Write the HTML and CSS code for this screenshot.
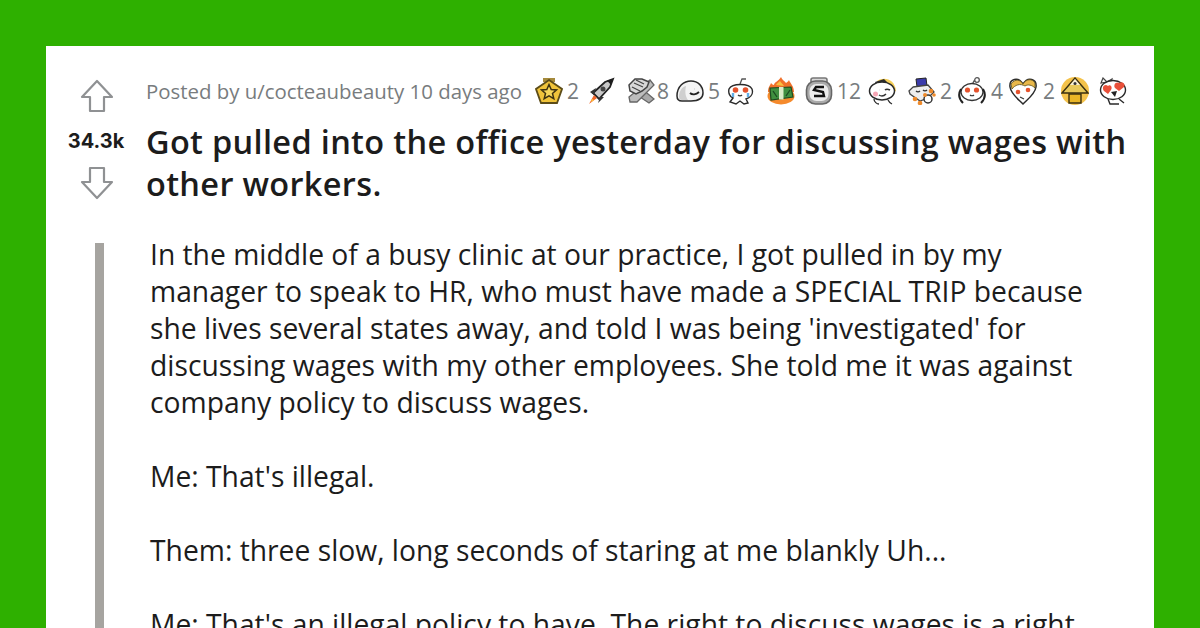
FILE: index.html
```html
<!DOCTYPE html>
<html lang="en">
<head>
<meta charset="utf-8">
<title>Got pulled into the office</title>
<link rel="stylesheet" href="styles.css">
</head>
<body>
<main class="card">
  <aside class="votes">
    <svg class="arrow" viewBox="0 0 34 34"><path d="M17 2 L32 18 H24 V32 H10 V18 H2 Z"/></svg>
    <div class="score">34.3k</div>
    <svg class="arrow" viewBox="0 0 34 34"><path d="M17 32 L32 16 H24 V2 H10 V16 H2 Z"/></svg>
  </aside>
  <div class="post">
    <header class="meta">
      <span class="byline">Posted by u/cocteaubeauty 10 days ago</span>
      <div class="awards">
        <svg class="aw" viewBox="0 0 28 28"><path d="M8 1h12v4H8z" fill="#a58a3c"/><path d="M14 3 27 12 22 26H6L1 12Z" fill="#f0c33a" stroke="#5c4c18" stroke-width="1.800"/><path d="M14 7.500l2.200 5 5.300.4-4 3.500 1.300 5.200L14 18.800 9.200 21.600l1.300-5.200-4-3.500 5.300-.4z" fill="#f6d65a" stroke="#3e3210" stroke-width="1.500"/></svg>
        <span class="n n1">2</span>
        <svg class="aw a2" viewBox="0 0 28 28"><path d="M6 16 18 5l8-3-3 8-11 12z" fill="#c8c8c8" stroke="#222" stroke-width="1.800"/><path d="M20 3.500 26 2l-2 6z" fill="#1c1c1c"/><circle cx="16" cy="12" r="2.500" fill="#444"/><path d="M9 11 3 15l4 3zM13 20l-2 6 6-6z" fill="#333"/><path d="M7 18l3 3-8 6z" fill="#f1662a"/><path d="M5 22l2 1-3 2z" fill="#fdd03a"/></svg>
        <svg class="aw a3" viewBox="0 0 28 28"><path d="M7 16 22 26l5-4L14 11z" fill="#a9a9a9" stroke="#666" stroke-width="1.300"/><path d="M23 3 27 8 10 25H3L2 20z" fill="#bdbdbd" stroke="#666" stroke-width="1.300"/><path d="M2 8 8 2h7l7 3-2 5-5 4-6 3-6-3z" fill="#d8d8d8" stroke="#444" stroke-width="1.500"/><path d="M7 6l9 4M5 10l8 4M9 3l8 4" stroke="#444" stroke-width="1.200" fill="none"/></svg>
        <span class="n n3">8</span>
        <svg class="aw a4" viewBox="0 0 28 28"><path d="M1 19C1 9 8 4 15 4s12 5 12 12c0 6-6 8-12 8H6c-3 0-5-2-5-5z" fill="#f4f4f4" stroke="#2a2a2a" stroke-width="1.500"/><path d="M3 20c0-6 3-10 7-11-1 5-1 10 2 14H6c-2 0-3-1-3-3z" fill="#cfcfcf"/><path d="M14 16c2 2 6 2 9-1M18 12h.1M24 11h.1" stroke="#222" stroke-width="1.800" fill="none"/></svg>
        <span class="n n4">5</span>
        <svg class="aw a5" viewBox="0 0 28 28"><path d="M14 7 16 2h4" stroke="#555" stroke-width="1.300" fill="none"/><path d="M3 12C6 6 23 6 26 12c2 6-3 9-6 10l2 4-4 1-4-3-4 3-6-2 3-4c-3-1-5-5-4-9z" fill="#fff" stroke="#2a2a2a" stroke-width="1.400"/><circle cx="9.500" cy="13" r="2.800" fill="#e5532d"/><circle cx="19.500" cy="13" r="2.800" fill="#e5532d"/><path d="M7 16v4M22 16v4" stroke="#62aee6" stroke-width="2.400"/><path d="M12 18c1 1 3 1 4 0" stroke="#333" stroke-width="1.300" fill="none"/></svg>
        <svg class="aw a6" viewBox="0 0 28 28"><path d="M14 0c1 3 4 4 5 6 2-1 3-3 3-3 1 3 5 6 5 12H1c0-5 2-6 3-9 1 1 2 2 3 2 0-3 5-4 7-8z" fill="#f1702a"/><path d="M9 8c1-2 3-3 4-4 1 2 3 3 4 5z" fill="#f9c040"/><ellipse cx="14" cy="19" rx="13.500" ry="8.500" fill="#f58a2c"/><path d="M3 11l21-1 2 10-22 3z" fill="#3f8f3f" stroke="#1c4a20" stroke-width="1.200"/><rect x="12" y="10" width="4.500" height="12.500" fill="#dcecc8"/><path d="M6 14l4 6M23 13l-4 6" stroke="#1c4a20" stroke-width="1.300"/></svg>
        <svg class="aw a7" viewBox="0 0 28 28"><rect x="6" y="1" width="16" height="7" rx="2" fill="#d8d8d8" stroke="#777" stroke-width="1.600"/><rect x="1.500" y="4" width="25" height="23" rx="9" fill="#aaa" stroke="#666" stroke-width="1.600"/><rect x="4.500" y="7" width="19" height="17" rx="7" fill="#ececec"/><path d="M19 10h-8l-2 3 9 2 1 4H9" fill="none" stroke="#111" stroke-width="2.400"/></svg>
        <span class="n n7">12</span>
        <svg class="aw a8" viewBox="0 0 28 28"><path d="M9 4C17-1 27 3 28 14l-5 2z" fill="#f7d058"/><path d="M7 5l9-3 3 3-10 4z" fill="#2a2a2a"/><ellipse cx="14" cy="14" rx="12.500" ry="9" fill="#fff" stroke="#2a2a2a" stroke-width="1.500"/><circle cx="7.500" cy="17" r="2.500" fill="#f7a6b5"/><path d="M11 13h.1M17 13c1-1 3-1 5 0M11 18c3 2 5 1 7-1" stroke="#333" stroke-width="1.500" fill="none"/><path d="M6 22c0 3 3 5 5 5M20 23c1 2 2 3 4 4" stroke="#2a2a2a" stroke-width="1.300" fill="none"/></svg>
        <svg class="aw a9" viewBox="0 0 28 28"><path d="M8 2l10-1 1 8-10 1z" fill="#3b3bab" stroke="#222"/><path d="M5 10l15-2 6 7-6 6-8 3-10-7-1-3z" fill="#eee" stroke="#444" stroke-width="1.300"/><path d="M8 14c1 1 3 1 4 0M15 13c1 1 3 1 4 0" stroke="#333" stroke-width="1.300" fill="none"/><circle cx="20" cy="22" r="4" fill="#fff" stroke="#333" stroke-width="1.500"/><g fill="#ee8a2b"><circle cx="7" cy="22" r="2.300"/><circle cx="12" cy="26" r="2.300"/><circle cx="23" cy="14" r="2.300"/><circle cx="26" cy="18" r="1.800"/><circle cx="17" cy="18" r="2"/></g></svg>
        <span class="n n9">2</span>
        <svg class="aw a10" viewBox="0 0 28 28"><path d="M14 8 16 4h2" stroke="#555" stroke-width="1.300" fill="none"/><circle cx="19" cy="3" r="2.300" fill="#fff" stroke="#555" stroke-width="1.300"/><ellipse cx="14" cy="15" rx="11" ry="8.500" fill="#fff" stroke="#333" stroke-width="1.300"/><circle cx="9.500" cy="13" r="2.600" fill="#e5532d"/><circle cx="18.500" cy="13" r="2.600" fill="#e5532d"/><path d="M12 18c1 1 3 1 4 0" stroke="#333" stroke-width="1.200" fill="none"/><path d="M3 12c-3 5-2 10 2 14M25 12c3 5 2 10-2 14" stroke="#222" stroke-width="2" fill="none"/></svg>
        <span class="n n10">4</span>
        <svg class="aw a11" viewBox="0 0 28 28"><path d="M14 7C9-1 0 2 1 10c1 7 8 12 13 17 5-5 12-10 13-17 1-8-8-11-13-3z" fill="#fff" stroke="#2a2a2a" stroke-width="1.500"/><path d="M2 7C6 1 12 3 14 7c3-5 9-6 12-1l0 5c-3-3-7-4-10-2C11 6 6 8 3 12z" fill="#e9b84a" stroke="#6a5a20" stroke-width=".9"/><circle cx="9" cy="15" r="2.300" fill="#e5532d"/><circle cx="19" cy="13" r="2.300" fill="#e5532d"/><path d="M11 20l4 2" stroke="#333" stroke-width="1.200"/></svg>
        <span class="n n11">2</span>
        <svg class="aw a12" viewBox="0 0 28 28"><circle cx="14" cy="14" r="14" fill="#f4c24a"/><path d="M14 1 27 16H1z" fill="#e8c95a" stroke="#3a2f10" stroke-width="1.400"/><path d="M14 2l5 6H9z" fill="#f7f0d8"/><circle cx="14" cy="6.500" r="1.500" fill="#333"/><path d="M8 17h12v9H8z" fill="#e9b526" stroke="#3a2f10" stroke-width="1.400"/></svg>
        <svg class="aw a13" viewBox="0 0 28 28"><path d="M8 5 4 1 2 6zM8 5l5-3-1 5z" fill="#fff" stroke="#444" stroke-width="1.200"/><ellipse cx="14" cy="13" rx="12.500" ry="9.500" fill="#fff" stroke="#2a2a2a" stroke-width="1.400"/><path d="M9 9c-3-3-7 1-4 5l4 3 3-4c2-3-1-6-3-4zM20 6c-3-2-6 2-4 5l4 3 5-4c2-3-2-6-5-4z" fill="#e9503a"/><path d="M12 15l6-1-2 6z" fill="#222"/><path d="M20 22l5 4M9 22l2 5 9 0" stroke="#2a2a2a" fill="none" stroke-width="1.400"/></svg>
      </div>
    </header>
    <h1 class="title">Got pulled into the office yesterday for discussing wages with other workers.</h1>
    <blockquote class="body">
      <p>In the middle of a busy clinic at our practice, I got pulled in by my manager to speak to HR, who must have made a SPECIAL TRIP because she lives several states away, and told I was being 'investigated' for discussing wages with my other employees. She told me it was against company policy to discuss wages.</p>
      <p>Me: That's illegal.</p>
      <p>Them: three slow, long seconds of staring at me blankly Uh...</p>
      <p>Me: That's an illegal policy to have. The right to discuss wages is a right</p>
    </blockquote>
  </div>
</main>
</body>
</html>
```

FILE: styles.css
```css
html, body {
  margin: 0;
  height: 628px;
  overflow: hidden;
  background: #2eb000;
}
body {
  padding: 46px 46px 0;
  box-sizing: border-box;
}
.card {
  display: flex;
  background: #fff;
  height: 582px;
  overflow: hidden;
  box-sizing: border-box;
  padding-top: 29px;
}
.votes {
  width: 100px;
  flex: none;
  display: flex;
  flex-direction: column;
  align-items: center;
}
.arrow {
  width: 34px;
  height: 34px;
  margin-left: 2px;
}
.arrow path {
  fill: #fff;
  stroke: #8f9193;
  stroke-width: 2.200;
  stroke-linejoin: round;
}
.arrow:first-child { margin-top: 4px; }
.score {
  font: 700 20px/24px "Inter", "Liberation Sans", sans-serif;
  color: #1c1c1c;
  margin: 16px 0 13px;
}
.post {
  flex: 1;
  min-width: 0;
}
.meta {
  display: flex;
  align-items: center;
  height: 32px;
}
.byline {
  font: 400 20.400px/32px "Open Sans", sans-serif;
  color: #787c7e;
  white-space: nowrap;
}
.awards {
  display: flex;
  align-items: center;
  margin-left: 13px;
}
.aw { width: 28px; height: 28px; flex: none; }
.n {
  font: 400 21px/28px "Open Sans", sans-serif;
  color: #787c7e;
  margin-left: 4px;
}
.a2 { margin-left: 8px; }
.a3 { margin-left: 12px; }
.n3 { margin-left: 2px; }
.a4 { margin-left: 7px; }
.n4 { margin-left: 4px; }
.a5 { margin-left: 6px; }
.a6 { margin-left: 13px; }
.a7 { margin-left: 10px; }
.a8 { margin-left: 7px; }
.a9 { margin-left: 12px; }
.n9 { margin-left: 4px; }
.a10 { margin-left: 6px; }
.n10 { margin-left: 5px; }
.a11 { margin-left: 6px; }
.n11 { margin-left: 6px; }
.a12 { margin-left: 6px; }
.a13 { margin-left: 10px; }
.title {
  margin: 14px 20px 0 0;
  font: 600 32.500px/42px "Open Sans", sans-serif;
  letter-spacing: .33px;
  color: #1c1c1c;
}
.body {
  margin: 0;
  padding: 0 0 0 4px;
  position: relative;
  font: 400 28.250px/37px "Open Sans", sans-serif;
  color: #1c1c1c;
}
.body::before {
  content: "";
  position: absolute;
  left: -51px;
  top: 38px;
  bottom: -100px;
  width: 9px;
  background: #a6a4a0;
}
.body p { margin: 0 54px 37px 0; }
.body p:first-child { padding-top: 31px; }
```
